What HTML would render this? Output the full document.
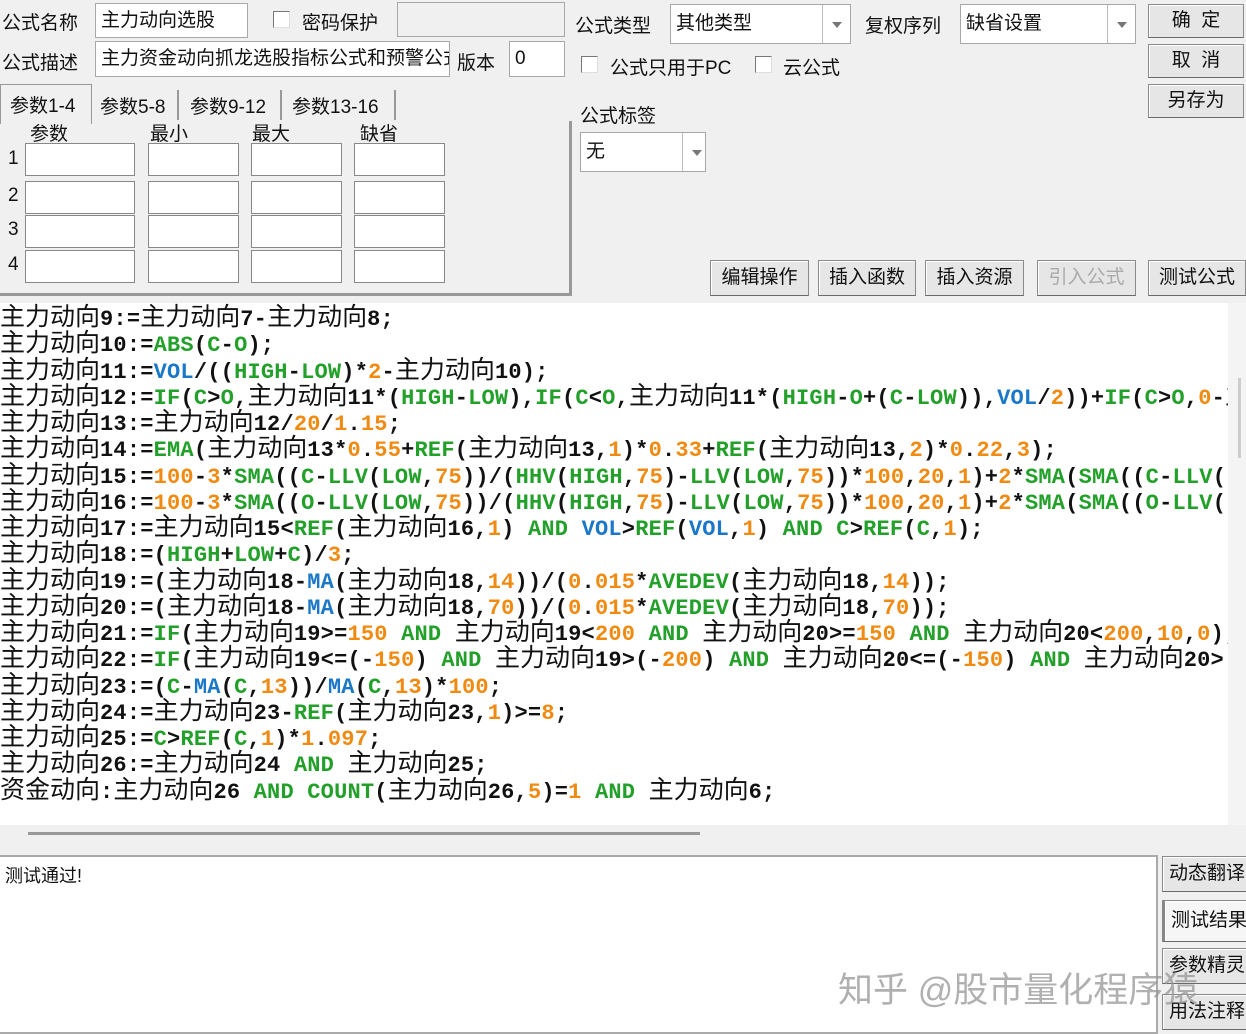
<!DOCTYPE html>
<html><head><meta charset="utf-8"><style>
*{box-sizing:border-box;margin:0;padding:0}
body{width:1246px;height:1034px;background:#f0f0f0;position:relative;overflow:hidden;font-family:"Liberation Sans","Noto Sans CJK SC",sans-serif;font-size:19px;color:#111}
.a{position:absolute}
.in{position:absolute;background:#fff;border:1px solid #a8a8a8;padding:2px 5px;white-space:nowrap;overflow:hidden}
.btn{position:absolute;background:#e6e6e6;border:1px solid #8a8a8a;border-bottom-color:#6a6a6a;text-align:center;font-size:19px;box-shadow:inset 1px 1px 0 #fff}
.cb{position:absolute;width:17px;height:17px;background:#fff;border:1px solid #777;border-right-color:#ddd;border-bottom-color:#ddd}
.dd{position:absolute;right:0;top:0;bottom:0;width:28px;border-left:1px solid #bbb;background:#fff}
.dd:after{content:"";position:absolute;left:9px;top:50%;margin-top:-2px;border-left:5px solid transparent;border-right:5px solid transparent;border-top:6px solid #777}
.pc{position:absolute;background:#fff;border:1px solid #888;height:33px}
#code{position:absolute;left:0;top:303px;width:1228px;height:522px;background:#fff;overflow:hidden;padding-top:4px;font-family:"Liberation Mono",monospace;font-weight:bold;font-size:22px;line-height:26.25px;letter-spacing:0.2px;white-space:pre;color:#111}
#code i{font-style:normal;font-weight:normal;font-family:"Noto Sans CJK SC",sans-serif;font-size:25px;letter-spacing:0;line-height:0}
.g{color:#22a02a}.b{color:#1b78c8}.o{color:#f08a10}
</style></head><body>
<div class="a" style="left:2px;top:8px">公式名称</div>
<div class="in" style="left:95px;top:3px;width:153px;height:35px;line-height:29px">主力动向选股</div>
<div class="cb" style="left:273px;top:11px"></div>
<div class="a" style="left:302px;top:8px">密码保护</div>
<div class="in" style="left:397px;top:2px;width:168px;height:35px;background:#f0f0f0"></div>
<div class="a" style="left:2px;top:48px">公式描述</div>
<div class="in" style="left:95px;top:41px;width:355px;height:36px;line-height:30px">主力资金动向抓龙选股指标公式和预警公式</div>
<div class="a" style="left:457px;top:48px">版本</div>
<div class="in" style="left:509px;top:41px;width:56px;height:36px;line-height:30px">0</div>
<div class="a" style="left:0;top:84px;width:92px;height:40px;border:1px solid #999;border-bottom:none;background:#f0f0f0;padding:6px 0 0 9px">参数1-4</div>
<div class="a" style="left:92px;top:90px;width:87px;height:30px;border-right:2px solid #999;padding:2px 0 0 8px">参数5-8</div>
<div class="a" style="left:181px;top:90px;width:101px;height:30px;border-right:2px solid #999;padding:2px 0 0 9px">参数9-12</div>
<div class="a" style="left:284px;top:90px;width:112px;height:30px;border-right:2px solid #999;padding:2px 0 0 8px">参数13-16</div>
<div class="a" style="left:0;top:121px;width:572px;height:175px;border-right:3px solid #999;border-bottom:3px solid #999"></div>
<div class="a" style="left:30px;top:119px">参数</div><div class="a" style="left:150px;top:119px">最小</div><div class="a" style="left:252px;top:119px">最大</div><div class="a" style="left:360px;top:119px">缺省</div>
<div class="a" style="left:8px;top:148px">1</div><div class="a" style="left:8px;top:185px">2</div><div class="a" style="left:8px;top:219px">3</div><div class="a" style="left:8px;top:254px">4</div>
<div class="pc" style="left:25px;top:143px;width:110px"></div><div class="pc" style="left:148px;top:143px;width:91px"></div><div class="pc" style="left:251px;top:143px;width:91px"></div><div class="pc" style="left:354px;top:143px;width:91px"></div>
<div class="pc" style="left:25px;top:181px;width:110px"></div><div class="pc" style="left:148px;top:181px;width:91px"></div><div class="pc" style="left:251px;top:181px;width:91px"></div><div class="pc" style="left:354px;top:181px;width:91px"></div>
<div class="pc" style="left:25px;top:215px;width:110px"></div><div class="pc" style="left:148px;top:215px;width:91px"></div><div class="pc" style="left:251px;top:215px;width:91px"></div><div class="pc" style="left:354px;top:215px;width:91px"></div>
<div class="pc" style="left:25px;top:250px;width:110px"></div><div class="pc" style="left:148px;top:250px;width:91px"></div><div class="pc" style="left:251px;top:250px;width:91px"></div><div class="pc" style="left:354px;top:250px;width:91px"></div>
<div class="a" style="left:575px;top:11px">公式类型</div>
<div class="in" style="left:670px;top:4px;width:181px;height:40px;line-height:33px">其他类型<div class="dd"></div></div>
<div class="a" style="left:865px;top:11px">复权序列</div>
<div class="in" style="left:960px;top:4px;width:176px;height:40px;line-height:33px">缺省设置<div class="dd"></div></div>
<div class="cb" style="left:581px;top:56px"></div><div class="a" style="left:610px;top:53px">公式只用于PC</div>
<div class="cb" style="left:755px;top:56px"></div><div class="a" style="left:783px;top:53px">云公式</div>
<div class="a" style="left:580px;top:101px">公式标签</div>
<div class="in" style="left:580px;top:132px;width:126px;height:40px;line-height:33px">无<div class="dd" style="width:23px"></div></div>
<div class="btn" style="left:1148px;top:4px;width:96px;height:34px;line-height:31px">确&nbsp;&nbsp;定</div>
<div class="btn" style="left:1148px;top:44px;width:96px;height:34px;line-height:31px">取&nbsp;&nbsp;消</div>
<div class="btn" style="left:1148px;top:84px;width:96px;height:34px;line-height:31px">另存为</div>
<div class="btn" style="left:710px;top:260px;width:99px;height:36px;line-height:33px">编辑操作</div>
<div class="btn" style="left:818px;top:260px;width:98px;height:36px;line-height:33px">插入函数</div>
<div class="btn" style="left:925px;top:260px;width:99px;height:36px;line-height:33px">插入资源</div>
<div class="btn" style="left:1037px;top:260px;width:99px;height:36px;line-height:33px;color:#aaa">引入公式</div>
<div class="btn" style="left:1148px;top:260px;width:98px;height:36px;line-height:33px">测试公式</div>
<div id="code"><i>主力动向</i>9:=<i>主力动向</i>7-<i>主力动向</i>8;
<i>主力动向</i>10:=<span class="g">ABS</span>(<span class="g">C</span>-<span class="g">O</span>);
<i>主力动向</i>11:=<span class="b">VOL</span>/((<span class="g">HIGH</span>-<span class="g">LOW</span>)*<span class="o">2</span>-<i>主力动向</i>10);
<i>主力动向</i>12:=<span class="g">IF</span>(<span class="g">C</span>&gt;<span class="g">O</span>,<i>主力动向</i>11*(<span class="g">HIGH</span>-<span class="g">LOW</span>),<span class="g">IF</span>(<span class="g">C</span>&lt;<span class="g">O</span>,<i>主力动向</i>11*(<span class="g">HIGH</span>-<span class="g">O</span>+(<span class="g">C</span>-<span class="g">LOW</span>)),<span class="b">VOL</span>/<span class="o">2</span>))+<span class="g">IF</span>(<span class="g">C</span>&gt;<span class="g">O</span>,<span class="o">0</span>-<i>主</i>
<i>主力动向</i>13:=<i>主力动向</i>12/<span class="o">20</span>/<span class="o">1</span>.<span class="o">15</span>;
<i>主力动向</i>14:=<span class="g">EMA</span>(<i>主力动向</i>13*<span class="o">0</span>.<span class="o">55</span>+<span class="g">REF</span>(<i>主力动向</i>13,<span class="o">1</span>)*<span class="o">0</span>.<span class="o">33</span>+<span class="g">REF</span>(<i>主力动向</i>13,<span class="o">2</span>)*<span class="o">0</span>.<span class="o">22</span>,<span class="o">3</span>);
<i>主力动向</i>15:=<span class="o">100</span>-<span class="o">3</span>*<span class="g">SMA</span>((<span class="g">C</span>-<span class="g">LLV</span>(<span class="g">LOW</span>,<span class="o">75</span>))/(<span class="g">HHV</span>(<span class="g">HIGH</span>,<span class="o">75</span>)-<span class="g">LLV</span>(<span class="g">LOW</span>,<span class="o">75</span>))*<span class="o">100</span>,<span class="o">20</span>,<span class="o">1</span>)+<span class="o">2</span>*<span class="g">SMA</span>(<span class="g">SMA</span>((<span class="g">C</span>-<span class="g">LLV</span>(<span class="g">LOW</span>
<i>主力动向</i>16:=<span class="o">100</span>-<span class="o">3</span>*<span class="g">SMA</span>((<span class="g">O</span>-<span class="g">LLV</span>(<span class="g">LOW</span>,<span class="o">75</span>))/(<span class="g">HHV</span>(<span class="g">HIGH</span>,<span class="o">75</span>)-<span class="g">LLV</span>(<span class="g">LOW</span>,<span class="o">75</span>))*<span class="o">100</span>,<span class="o">20</span>,<span class="o">1</span>)+<span class="o">2</span>*<span class="g">SMA</span>(<span class="g">SMA</span>((<span class="g">O</span>-<span class="g">LLV</span>(<span class="g">LOW</span>
<i>主力动向</i>17:=<i>主力动向</i>15&lt;<span class="g">REF</span>(<i>主力动向</i>16,<span class="o">1</span>) <span class="g">AND</span> <span class="b">VOL</span>&gt;<span class="g">REF</span>(<span class="b">VOL</span>,<span class="o">1</span>) <span class="g">AND</span> <span class="g">C</span>&gt;<span class="g">REF</span>(<span class="g">C</span>,<span class="o">1</span>);
<i>主力动向</i>18:=(<span class="g">HIGH</span>+<span class="g">LOW</span>+<span class="g">C</span>)/<span class="o">3</span>;
<i>主力动向</i>19:=(<i>主力动向</i>18-<span class="b">MA</span>(<i>主力动向</i>18,<span class="o">14</span>))/(<span class="o">0</span>.<span class="o">015</span>*<span class="g">AVEDEV</span>(<i>主力动向</i>18,<span class="o">14</span>));
<i>主力动向</i>20:=(<i>主力动向</i>18-<span class="b">MA</span>(<i>主力动向</i>18,<span class="o">70</span>))/(<span class="o">0</span>.<span class="o">015</span>*<span class="g">AVEDEV</span>(<i>主力动向</i>18,<span class="o">70</span>));
<i>主力动向</i>21:=<span class="g">IF</span>(<i>主力动向</i>19&gt;=<span class="o">150</span> <span class="g">AND</span> <i>主力动向</i>19&lt;<span class="o">200</span> <span class="g">AND</span> <i>主力动向</i>20&gt;=<span class="o">150</span> <span class="g">AND</span> <i>主力动向</i>20&lt;<span class="o">200</span>,<span class="o">10</span>,<span class="o">0</span>);
<i>主力动向</i>22:=<span class="g">IF</span>(<i>主力动向</i>19&lt;=(-<span class="o">150</span>) <span class="g">AND</span> <i>主力动向</i>19&gt;(-<span class="o">200</span>) <span class="g">AND</span> <i>主力动向</i>20&lt;=(-<span class="o">150</span>) <span class="g">AND</span> <i>主力动向</i>20&gt;
<i>主力动向</i>23:=(<span class="g">C</span>-<span class="b">MA</span>(<span class="g">C</span>,<span class="o">13</span>))/<span class="b">MA</span>(<span class="g">C</span>,<span class="o">13</span>)*<span class="o">100</span>;
<i>主力动向</i>24:=<i>主力动向</i>23-<span class="g">REF</span>(<i>主力动向</i>23,<span class="o">1</span>)&gt;=<span class="o">8</span>;
<i>主力动向</i>25:=<span class="g">C</span>&gt;<span class="g">REF</span>(<span class="g">C</span>,<span class="o">1</span>)*<span class="o">1</span>.<span class="o">097</span>;
<i>主力动向</i>26:=<i>主力动向</i>24 <span class="g">AND</span> <i>主力动向</i>25;
<i>资金动向</i>:<i>主力动向</i>26 <span class="g">AND</span> <span class="g">COUNT</span>(<i>主力动向</i>26,<span class="o">5</span>)=<span class="o">1</span> <span class="g">AND</span> <i>主力动向</i>6;</div>
<div class="a" style="left:1228px;top:303px;width:18px;height:522px;background:#f4f4f4"></div>
<div class="a" style="left:1238px;top:378px;width:3px;height:80px;background:#ccc"></div>
<div class="a" style="left:28px;top:832px;width:672px;height:3px;background:#999"></div>
<div class="a" style="left:0;top:855px;width:1158px;height:179px;background:#fff;border-top:2px solid #aaa;border-right:2px solid #aaa;border-bottom:2px solid #aaa"></div>
<div class="a" style="left:5px;top:862px;font-size:18px">测试通过!</div>
<div class="btn" style="left:1162px;top:856px;width:90px;height:36px;line-height:34px;text-align:left;padding-left:6px">动态翻译</div>
<div class="btn" style="left:1162px;top:900px;width:90px;height:42px;line-height:40px;text-align:left;padding-left:6px;background:#f6f6f6;border-left:3px solid #888">测试结果</div>
<div class="btn" style="left:1162px;top:948px;width:90px;height:36px;line-height:34px;text-align:left;padding-left:6px">参数精灵</div>
<div class="btn" style="left:1162px;top:994px;width:90px;height:36px;line-height:34px;text-align:left;padding-left:6px">用法注释</div>
<div class="a" style="left:838px;top:962px;font-size:35px;color:rgba(150,150,150,.75);white-space:nowrap">知乎 @股市量化程序猿</div>
</body></html>
